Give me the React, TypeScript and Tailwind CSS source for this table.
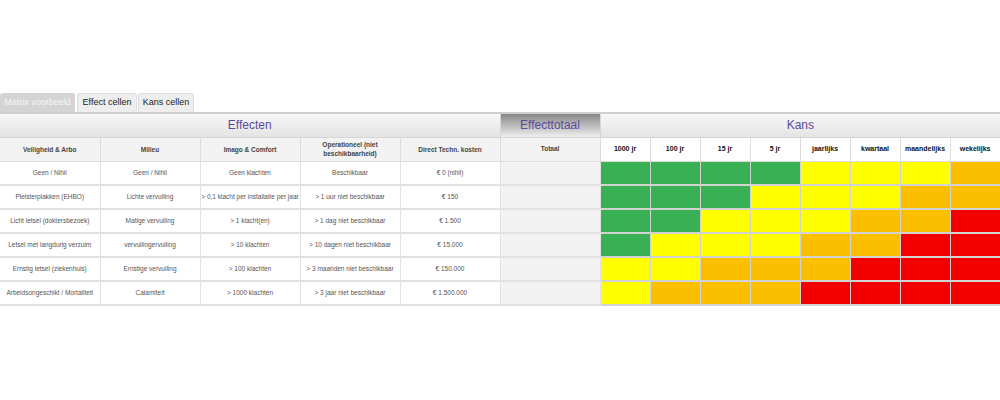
const effectHeaders = [
  "Veiligheid & Arbo",
  "Milieu",
  "Imago & Comfort",
  "Operationeel (niet beschikbaarheid)",
  "Direct Techn. kosten",
];

const kansHeaders = ["1000 jr", "100 jr", "15 jr", "5 jr", "jaarlijks", "kwartaal", "maandelijks", "wekelijks"];

const rows = [
  ["Geen / Nihil", "Geen / Nihil", "Geen klachten", "Beschikbaar", "€ 0 (nihil)"],
  ["Pleisterplakken (EHBO)", "Lichte vervuiling", "> 0,1 klacht per installatie per jaar", "> 1 uur niet beschikbaar", "€ 150"],
  ["Licht letsel (doktersbezoek)", "Matige vervuiling", "> 1 klacht(en)", "> 1 dag niet beschikbaar", "€ 1.500"],
  ["Letsel met langdurig verzuim", "vervuilingervuiling", "> 10 klachten", "> 10 dagen niet beschikbaar", "€ 15.000"],
  ["Ernstig letsel (ziekenhuis)", "Ernstige vervuiling", "> 100 klachten", "> 3 maanden niet beschikbaar", "€ 150.000"],
  ["Arbeidsongeschikt / Mortaliteit", "Calamiteit", "> 1000 klachten", "> 3 jaar niet beschikbaar", "€ 1.500.000"],
];

// G = groen, Y = geel, O = oranje, R = rood
const risk = ["GGGGYYYO", "GGGYYYOO", "GGYYYOOR", "GYYYOORR", "YYOOORRR", "YOOORRRR"];

const colour: Record<string, string> = {
  G: "bg-[#39b054]",
  Y: "bg-[#ffff00]",
  O: "bg-[#fbbf00]",
  R: "bg-[#f20000]",
};

export default function App() {
  return (
    <div className="w-[1000px] h-[400px] bg-white font-['Liberation_Sans',Arial,sans-serif] pt-[93px]">
      {/* Tabs */}
      <div className="flex gap-[2px] h-[19px]">
        <div className="w-[75px] flex items-center justify-center rounded-t-[3px] bg-[#d4d4d4] text-[#f6f6f6] text-[9px]">
          Matrix voorbeeld
        </div>
        <div className="w-[60px] flex items-center justify-center rounded-t-[3px] bg-[#eeeeee] border border-b-0 border-[#dddddd] text-[#222] text-[9px]">
          Effect cellen
        </div>
        <div className="w-[56px] -ml-[1px] flex items-center justify-center rounded-t-[3px] bg-[#eeeeee] border border-b-0 border-[#dddddd] text-[#222] text-[9px]">
          Kans cellen
        </div>
      </div>

      <table className="w-[1000px] table-fixed border-collapse border-t-2 border-[#cfcfcf]">
        <colgroup>
          {effectHeaders.map((h) => (
            <col key={h} className="w-[100px]" />
          ))}
          <col className="w-[100px]" />
          {kansHeaders.map((h) => (
            <col key={h} className="w-[50px]" />
          ))}
        </colgroup>
        <thead>
          <tr className="h-[24px]">
            <th
              colSpan={5}
              className="bg-gradient-to-b from-[#f7f7f7] to-[#e4e4e4] text-[#5b4b9b] text-[12px] font-normal border-b border-[#d6d6d6]"
            >
              Effecten
            </th>
            <th className="bg-gradient-to-b from-[#888888] to-[#f0f0f0] text-[#5b4b9b] text-[12px] font-normal border-x border-b border-[#d6d6d6]">
              Effecttotaal
            </th>
            <th
              colSpan={8}
              className="bg-gradient-to-b from-[#f7f7f7] to-[#e4e4e4] text-[#5b4b9b] text-[12px] font-normal border-b border-[#d6d6d6]"
            >
              Kans
            </th>
          </tr>
          <tr className="h-[24px]">
            {effectHeaders.map((h) => (
              <th
                key={h}
                className="bg-[#f3f3f3] text-[#444] text-[6.5px] leading-[9px] font-bold px-[16px] border-r border-b border-[#dcdcdc]"
              >
                {h}
              </th>
            ))}
            <th className="bg-[#f3f3f3] text-[#444] text-[6.5px] font-bold border-r border-b border-[#dcdcdc]">Totaal</th>
            {kansHeaders.map((h) => (
              <th key={h} className="bg-white text-[#111] text-[7px] font-bold border-r border-b border-[#dcdcdc]">
                {h}
              </th>
            ))}
          </tr>
        </thead>
        <tbody>
          {rows.map((r, i) => (
            <tr key={i} className="h-[24px]">
              {r.map((c, j) => (
                <td
                  key={j}
                  className="bg-white text-[#555] text-[6.5px] text-center whitespace-nowrap border-r border-b-2 border-[#e2e2e2]"
                >
                  {c}
                </td>
              ))}
              <td className="bg-[#f3f3f3] border-r border-b-2 border-[#e2e2e2]" />
              {risk[i].split("").map((k, j) => (
                <td key={j} className={`${colour[k]} border-r border-b-2 border-[#d2d2d2]`} />
              ))}
            </tr>
          ))}
        </tbody>
      </table>
    </div>
  );
}
